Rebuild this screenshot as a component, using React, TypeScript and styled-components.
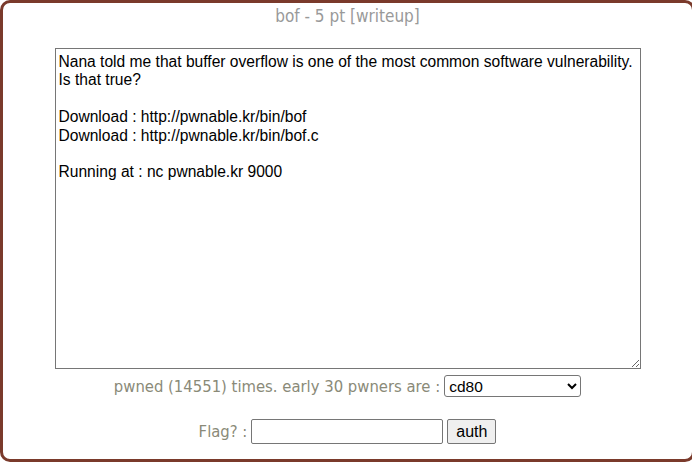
import React from "react";
import styled, { createGlobalStyle } from "styled-components";

const Global = createGlobalStyle`
  html, body { margin: 0; padding: 0; background: #fff; overflow: hidden; }
  body { font-family: "Liberation Sans", Arial, sans-serif; }
`;

const Frame = styled.div`
  box-sizing: border-box;
  width: 695px;
  height: 462px;
  border: 3px solid #7a3a2b;
  border-radius: 10px;
  background: #fff;
  display: flex;
  flex-direction: column;
  align-items: center;
`;

const Title = styled.div`
  font-family: "Liberation Sans Narrow", "DejaVu Sans Condensed", sans-serif;
  font-size: 17px;
  color: #999999;
  height: 20px;
  line-height: 20px;
  margin-top: 3px;
`;

const Desc = styled.textarea`
  box-sizing: border-box;
  width: 586px;
  height: 321px;
  margin-top: 22px;
  padding: 4px 3px 2px;
  border: 1px solid #767676;
  font-family: "Liberation Sans", Arial, sans-serif;
  font-size: 15.6px;
  line-height: 18.4px;
  color: #000;
  outline: none;
`;

const Row = styled.div<{ $top: number }>`
  display: flex;
  align-items: center;
  gap: 4px;
  margin-top: ${(p) => p.$top}px;
`;

const Label = styled.span`
  font-family: "Liberation Sans Narrow", "DejaVu Sans Condensed", sans-serif;
  font-size: 16.5px;
  color: #8a8a78;
`;

const Select = styled.select`
  box-sizing: border-box;
  width: 137px;
  height: 22px;
  font-family: "Liberation Sans", Arial, sans-serif;
  font-size: 15.5px;
  border: 1px solid #767676;
  border-radius: 3px;
  background: #fff;
  color: #000;
`;

const Input = styled.input`
  box-sizing: border-box;
  width: 192px;
  height: 25px;
  border: 1px solid #767676;
  border-radius: 2px;
`;

const Button = styled.button`
  box-sizing: border-box;
  width: 49px;
  height: 25px;
  font-family: "Liberation Sans", Arial, sans-serif;
  font-size: 16px;
  background: #efefef;
  border: 1px solid #767676;
  border-radius: 2px;
  color: #000;
  padding: 0;
`;

const text = `Nana told me that buffer overflow is one of the most common software vulnerability. 
Is that true?

Download : http://pwnable.kr/bin/bof
Download : http://pwnable.kr/bin/bof.c

Running at : nc pwnable.kr 9000
`;

export default function App() {
  return (
    <>
      <Global />
      <Frame>
        <Title>bof - 5 pt [writeup]</Title>
        <Desc readOnly defaultValue={text} />
        <Row $top={6}>
          <Label>pwned (14551) times. early 30 pwners are :</Label>
          <Select defaultValue="cd80">
            <option value="cd80">cd80</option>
          </Select>
        </Row>
        <Row $top={22}>
          <Label>Flag? :</Label>
          <Input type="text" />
          <Button>auth</Button>
        </Row>
      </Frame>
    </>
  );
}
